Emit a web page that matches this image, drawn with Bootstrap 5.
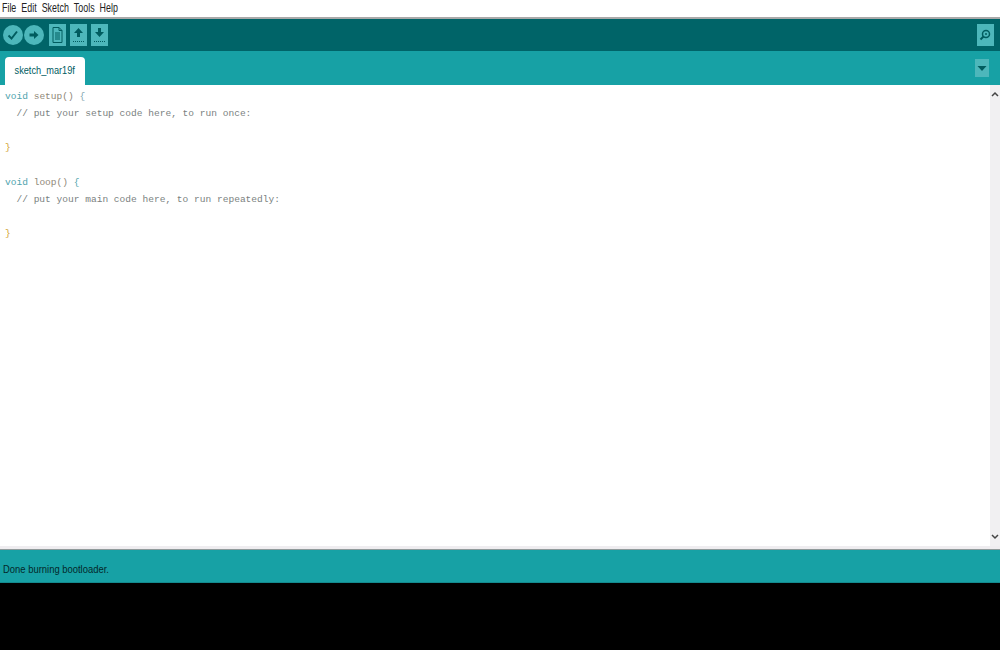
<!DOCTYPE html>
<html lang="en"><head><meta charset="utf-8"><title>sketch_mar19f</title>
<link href="https://cdn.jsdelivr.net/npm/bootstrap@5.3.0/dist/css/bootstrap.min.css" rel="stylesheet">
<style>
html,body{height:650px;overflow:hidden;background:#fff}
.ide{width:1000px;height:650px}
.menubar{height:17px;background:#fff;padding-left:2px}
.menuitems{gap:6.800px;font:12px/16px "Liberation Sans",sans-serif;color:#222;transform:scaleX(.74);transform-origin:left center}
.rule{height:2px;background:#a9a9a9}
.toolbar{height:32px;background:#006468;padding:0 6px 0 3px}
.tool{display:block;flex:none}
.gap-1px{gap:1px}
.runbtns{margin-right:1px}
.tabbar{height:34px;background:#17a1a5;padding:6px 11px 0 5px}
.sketchtab{width:80px;height:28px;background:#fff;border-radius:4px 4px 0 0;font:11.500px/27px "Liberation Sans",sans-serif;color:#005c5f;text-align:center}
.squeeze{display:inline-block;transform:scaleX(.8)}
.tabmenu{margin-top:2px}
.editor{height:461px;background:#fff}
.code{flex:1;margin:0;padding:3px 0 0 5px;font:9.550px/17.150px "Liberation Mono",monospace;color:#7a7f80;overflow:hidden}
.kw{color:#4fa3ad}.fn{color:#8f8878}.br{color:#d0a030}.br2{color:#7fa6b0}
.scroller{width:10px;background:#f1f0f2;display:flex;flex-direction:column;justify-content:space-between;padding:6px 0}
.band{height:3px;background:#efedf0}
.status{height:34px;background:#17a1a5;border-top:1px solid #8f9a9a;border-bottom:1px solid #148a8e;padding:0 3px;font:11.500px/38px "Liberation Sans",sans-serif;color:#04292b}
.status .squeeze{transform:scaleX(.82);transform-origin:left center}
.console{height:67px;background:#000}
</style></head><body>
<div class="ide d-flex flex-column">
<div class="menubar"><div class="menuitems d-flex"><span>File</span><span>Edit</span><span>Sketch</span><span>Tools</span><span>Help</span></div></div>
<div class="rule"></div>
<div class="toolbar d-flex align-items-center justify-content-between">
<div class="d-flex align-items-center gap-1">
<div class="runbtns d-flex gap-1px">
<svg class="tool" width="20" height="20" viewBox="0 0 20 20"><circle cx="10" cy="10" r="10" fill="#4db7bb"/><path d="M5.500 10.500l3 3 5.500-7" fill="none" stroke="#005c5f" stroke-width="2"/></svg>
<svg class="tool" width="20" height="20" viewBox="0 0 20 20"><circle cx="10" cy="10" r="10" fill="#4db7bb"/><path d="M5.500 8.500h4.500V6l4.500 4-4.500 4v-2.500H5.500z" fill="#005c5f"/></svg>
</div>
<svg class="tool" width="17" height="22" viewBox="0 0 17 22"><rect width="17" height="22" fill="#4db7bb"/><path d="M4 3.500h6l3 3v12H4z" fill="none" stroke="#005c5f"/><path d="M10 3.500v3h3M6 9h5M6 11h5M6 13h5M6 15h5" fill="none" stroke="#005c5f"/></svg>
<svg class="tool" width="17" height="22" viewBox="0 0 17 22"><rect width="17" height="22" fill="#4db7bb"/><path d="M8.500 4l4.500 5h-3v4H7V9H4z" fill="#005c5f"/><path d="M3 17.500h11" stroke="#005c5f" stroke-dasharray="1 1"/></svg>
<svg class="tool" width="17" height="22" viewBox="0 0 17 22"><rect width="17" height="22" fill="#4db7bb"/><path d="M7 4h3v4h3l-4.500 5L4 8h3z" fill="#005c5f"/><path d="M3 17.500h11" stroke="#005c5f" stroke-dasharray="1 1"/></svg>
</div>
<svg class="tool" width="17" height="22" viewBox="0 0 17 22"><rect width="17" height="22" fill="#4db7bb"/><circle cx="9" cy="10" r="3.500" fill="none" stroke="#005c5f" stroke-width="1.500"/><circle cx="9" cy="10" r="1" fill="#005c5f"/><path d="M6.500 12.500l-3 3" stroke="#005c5f" stroke-width="2"/></svg>
</div>
<div class="tabbar d-flex justify-content-between">
<div class="sketchtab"><span class="squeeze">sketch_mar19f</span></div>
<svg class="tabmenu" width="14" height="18" viewBox="0 0 14 18"><rect width="14" height="18" fill="#4db7bb"/><path d="M2.500 7h9L7 12z" fill="#005c5f"/></svg>
</div>
<div class="editor d-flex">
<pre class="code"><span class="kw">void</span> <span class="fn">setup</span><span class="fn">()</span> <span class="br2">{</span>
  // put your setup code here, to run once:

<span class="br">}</span>

<span class="kw">void</span> <span class="fn">loop</span><span class="fn">()</span> <span class="kw">{</span>
  // put your main code here, to run repeatedly:

<span class="br">}</span></pre>
<div class="scroller">
<svg width="10" height="6" viewBox="0 0 10 6"><path d="M2 5l3-3 3 3" fill="none" stroke="#444" stroke-width="1.500"/></svg>
<svg width="10" height="6" viewBox="0 0 10 6"><path d="M2 1l3 3 3-3" fill="none" stroke="#444" stroke-width="1.500"/></svg>
</div>
</div>
<div class="band"></div>
<div class="status"><span class="squeeze">Done burning bootloader.</span></div>
<div class="console"></div>
</div>
</body></html>
